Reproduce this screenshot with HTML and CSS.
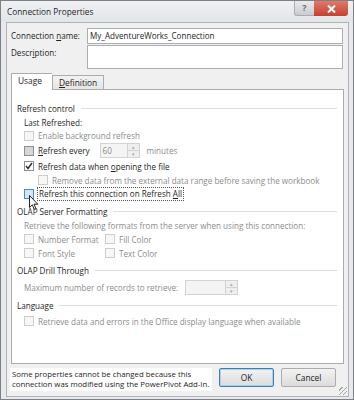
FILE: index.html
```html
<!DOCTYPE html>
<html lang="en">
<head>
  <meta charset="UTF-8">
  <meta name="viewport" content="width=device-width, initial-scale=1.0">
  <link rel="stylesheet" href="styles.css">
</head>
<body>

<div class="window">
  <div class="titlebar">
    <span class="title">Connection Properties</span>
    <div class="caption-btns">
      <span class="btn-help">?</span>
      <span class="btn-close">
        <svg width="9" height="8" viewBox="0 0 9 8"><path d="M1 0.5 L8 7.5 M8 0.5 L1 7.5" stroke="#fff" stroke-width="2"/></svg>
      </span>
    </div>
  </div>

  <div class="client">
    <div class="field-row">
      <span class="label">Connection <u>n</u>ame:</span>
      <div class="textbox">My_AdventureWorks_Connection</div>
    </div>
    <div class="field-row">
      <span class="label">Descr<u>i</u>ption:</span>
      <div class="textbox tall"></div>
    </div>

    <div class="tabs">
      <span class="tab active">Usage</span>
      <span class="tab"><u>D</u>efinition</span>
    </div>

    <div class="panel">
      <div class="group-title first"><span>Refresh control</span></div>
      <div class="row indent"><span>Last Refreshed:</span></div>
      <div class="row indent short disabled"><span class="box"></span><span>Enable background refresh</span></div>
      <div class="row indent tall">
        <span class="box gray"></span><span><u>R</u>efresh every</span>
        <span class="spinner small"><span class="spin-val">60</span><span class="spin-arrows"><i>&#9652;</i><i>&#9662;</i></span></span>
        <span class="muted">minutes</span>
      </div>
      <div class="row indent">
        <span class="box">
          <svg width="8" height="8" viewBox="0 0 8 8"><path d="M1 4 L3 6.5 L7 1" fill="none" stroke="#2d2d2d" stroke-width="1.4"/></svg>
        </span><span>Refresh data when <u>o</u>pening the file</span>
      </div>
      <div class="row indent2 disabled"><span class="box"></span><span>Remove data from the external data range before saving the workbook</span></div>
      <div class="row indent">
        <span class="box hover"></span><span class="focus">Refresh this connection on Refresh <u>A</u>ll</span>
      </div>

      <div class="group-title"><span>OLAP Server Formatting</span></div>
      <div class="row indent disabled"><span>Retrieve the following formats from the server when using this connection:</span></div>
      <div class="row indent disabled">
        <span class="cell"><span class="box"></span><span>Number Format</span></span>
        <span class="cell"><span class="box"></span><span>Fill Color</span></span>
      </div>
      <div class="row indent disabled">
        <span class="cell"><span class="box"></span><span>Font Style</span></span>
        <span class="cell"><span class="box"></span><span>Text Color</span></span>
      </div>

      <div class="group-title"><span>OLAP Drill Through</span></div>
      <div class="row indent tall gap disabled">
        <span>Maximum number of records to retrieve:</span>
        <span class="spinner wide"><span class="spin-val"></span><span class="spin-arrows"><i>&#9652;</i><i>&#9662;</i></span></span>
      </div>

      <div class="group-title gap"><span>Language</span></div>
      <div class="row indent gap disabled"><span class="box"></span><span>Retrieve data and errors in the Office display language when available</span></div>

      <svg class="cursor" width="10" height="16" viewBox="0 0 10 16">
        <path d="M0.5 0.5 L0.5 12.5 L3.3 9.8 L5.3 14.5 L7 13.8 L5 9.2 L8.8 9.2 Z" fill="#fff" stroke="#222" stroke-width="1"/>
      </svg>
    </div>

    <div class="footer">
      <div class="note">Some properties cannot be changed because this connection was modified using the PowerPivot Add-In.</div>
      <div class="buttons">
        <span class="button default">OK</span>
        <span class="button">Cancel</span>
      </div>
    </div>
    <div class="grip"></div>
  </div>
</div>

</body>
</html>
```

FILE: styles.css
```css
body {
  margin: 0;
  font-family: "Open Sans", "Noto Sans", sans-serif;
  font-size: 8.1px;
  color: #1e1e1e;
  background: #fff;
}

.window {
  width: 352px;
  height: 398px;
  border: 1px solid #7d8187;
  background: #e7e9ec;
  position: relative;
}

.titlebar {
  height: 21px;
  display: flex;
  align-items: flex-start;
  justify-content: space-between;
  background: linear-gradient(#eef0f2, #e3e6e9);
}

.title {
  font-size: 8.3px;
  margin: 5px 0 0 6px;
}

.caption-btns {
  display: flex;
  margin-right: 5px;
}

.btn-help {
  width: 19px;
  height: 14px;
  border: 1px solid #a9adb3;
  border-top: none;
  border-right: none;
  border-radius: 0 0 0 3px;
  background: linear-gradient(#e9eaec, #c9ccd0);
  color: #6b6f75;
  font-size: 9px;
  font-weight: bold;
  text-align: center;
  line-height: 13px;
}

.btn-close {
  width: 34px;
  height: 15px;
  border-radius: 0 0 3px 0;
  background: linear-gradient(#de7b6a, #c5402f);
  display: flex;
  align-items: center;
  justify-content: center;
}

.client {
  margin: 0 4px 0 5px;
  height: 375px;
  border: 1px solid #aeb3b9;
  background: #f0f0f0;
  padding: 5px 5px 0 4px;
  box-sizing: border-box;
  position: relative;
}

.field-row {
  display: flex;
  margin-bottom: 1px;
}

.label {
  width: 76px;
  line-height: 15px;
}

.textbox {
  flex: 1;
  height: 16px;
  border: 1px solid #abadb3;
  background: #fff;
  box-sizing: border-box;
  padding-left: 2px;
  line-height: 14px;
  font-size: 8.1px;
}

.textbox.tall {
  height: 24px;
}

.tabs {
  display: flex;
  align-items: flex-end;
  height: 15px;
  margin-top: 5px;
  position: relative;
  z-index: 1;
}

.tab {
  height: 13px;
  line-height: 13px;
  padding: 0 6px;
  border: 1px solid #acacac;
  border-bottom: none;
  background: linear-gradient(#f2f2f2, #e5e5e5);
  font-size: 8.4px;
}

.tab.active {
  width: 28px;
  height: 16px;
  line-height: 14px;
  background: #fff;
  border-right: none;
  margin-bottom: -1px;
}

.panel {
  height: 275px;
  margin-right: -1px;
  border: 1px solid #acacac;
  background: #fff;
  box-sizing: border-box;
  padding: 11px 6px 0 5px;
  position: relative;
}

.group-title {
  display: flex;
  align-items: center;
  height: 14px;
  margin-top: 3px;
}

.group-title.first {
  margin-top: 0;
}

.group-title.gap {
  margin-top: 2px;
}

.group-title::after {
  content: "";
  flex: 1;
  height: 1px;
  background: #dedede;
  margin-left: 6px;
}

.row {
  display: flex;
  align-items: center;
  height: 14px;
  white-space: nowrap;
}

.row.short {
  height: 13px;
}

.row.tall {
  height: 17px;
}

.row.gap {
  margin-top: 2px;
}

.indent {
  padding-left: 7px;
}

.indent2 {
  padding-left: 21px;
}

.disabled {
  color: #8c8c8c;
}

.muted {
  color: #8c8c8c;
  margin-left: 7px;
}

.cell {
  display: flex;
  align-items: center;
  width: 81px;
}

.box {
  width: 10px;
  height: 10px;
  border: 1px solid #8e8f8f;
  background: #fff;
  box-sizing: border-box;
  margin-right: 4px;
  display: flex;
  align-items: center;
  justify-content: center;
  flex-shrink: 0;
}

.disabled .box {
  border-color: #cdcdcd;
  background: #f7f7f7;
}

.box.gray {
  background: #d6d6d6;
  border-color: #8e8f8f;
}

.box.hover {
  border-color: #4f8bc1;
  background: #cfe6f7;
}

.focus {
  outline: 1px dotted #555;
  padding: 0 1px;
  line-height: 12px;
}

.spinner {
  display: flex;
  height: 15px;
  border: 1px solid #d3d3d3;
  background: #f4f4f4;
  box-sizing: border-box;
}

.spinner.small {
  width: 40px;
  margin-left: 10px;
}

.spinner.wide {
  width: 53px;
  margin-left: 7px;
}

.spin-val {
  flex: 1;
  color: #8c8c8c;
  padding-left: 2px;
  line-height: 13px;
}

.spin-arrows {
  width: 11px;
  border-left: 1px solid #d3d3d3;
  display: flex;
  flex-direction: column;
}

.spin-arrows i {
  flex: 1;
  font-style: normal;
  font-size: 5px;
  line-height: 6px;
  text-align: center;
  color: #a7a7a7;
  background: #efefef;
}

.spin-arrows i + i {
  border-top: 1px solid #d3d3d3;
}

.cursor {
  position: absolute;
  left: 17px;
  top: 105px;
}

.footer {
  display: flex;
  align-items: flex-start;
  margin-top: 4px;
}

.note {
  width: 207px;
  background: #fff;
  line-height: 9.5px;
  padding: 2px 1px 2px 2px;
  margin-left: -1px;
  font-size: 7.8px;
}

.buttons {
  display: flex;
  margin-left: 7px;
}

.button {
  width: 55px;
  height: 19px;
  box-sizing: border-box;
  border: 1px solid #acacac;
  border-radius: 2px;
  background: linear-gradient(#f2f2f2, #dcdcdc);
  text-align: center;
  line-height: 17px;
  font-size: 8.4px;
  margin-right: 7px;
}

.button.default {
  border-color: #3c7fb1;
  box-shadow: inset 0 0 0 1px #a8d0ef;
}

.grip {
  position: absolute;
  right: 1px;
  bottom: 1px;
  width: 8px;
  height: 8px;
  background: repeating-linear-gradient(135deg, transparent 0 2px, #a4a4a4 2px 3px);
}
```
